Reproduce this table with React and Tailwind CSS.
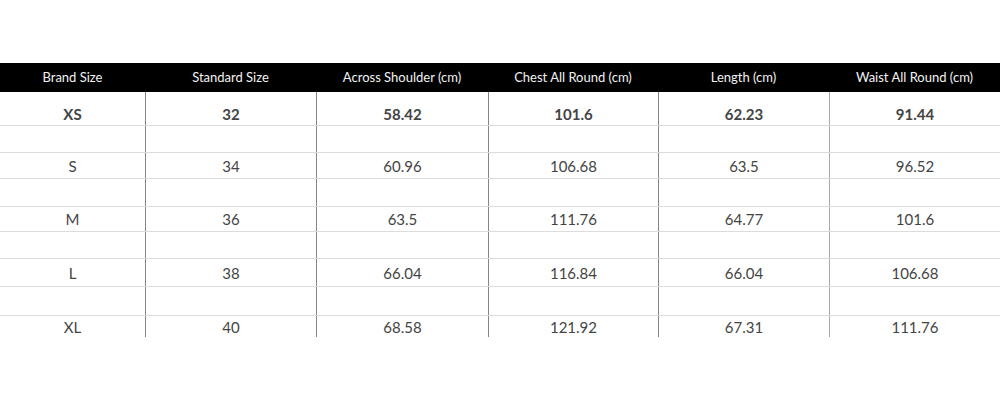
const columns = [
  { label: 'Brand Size', width: 'w-[145px]' },
  { label: 'Standard Size', width: 'w-[171px]' },
  { label: 'Across Shoulder (cm)', width: 'w-[172px]' },
  { label: 'Chest All Round (cm)', width: 'w-[170px]' },
  { label: 'Length (cm)', width: 'w-[171px]' },
  { label: 'Waist All Round (cm)', width: 'w-[171px]' },
];

const sizes = [
  ['XS', '32', '58.42', '101.6', '62.23', '91.44'],
  ['S', '34', '60.96', '106.68', '63.5', '96.52'],
  ['M', '36', '63.5', '111.76', '64.77', '101.6'],
  ['L', '38', '66.04', '116.84', '66.04', '106.68'],
  ['XL', '40', '68.58', '121.92', '67.31', '111.76'],
];

// row heights measured off the chart, spacer rows sit between the sizes
const rowHeights = ['h-[34px]', 'h-[26px]', 'h-[25px]', 'h-[28px]', 'h-[21px]'];
const spacerHeights = ['h-[27px]', 'h-[28px]', 'h-[27px]', 'h-[29px]'];

function cellBorder(i) {
  if (i === 0) return '';
  if (i === 5) return 'border-l border-[#a8a8a8]';
  return 'border-l border-[#858585]';
}

function Row({ cells, height, bold, last }) {
  return (
    <div className={`flex ${height} ${last ? 'overflow-hidden' : 'border-b border-[#dcdcdc]'}`}>
      {columns.map((col, i) => (
        <div
          key={col.label}
          className={`${col.width} ${cellBorder(i)} flex justify-center ${
            bold ? 'items-end pb-[2px] font-bold' : last ? 'items-start pt-[2px]' : 'items-center'
          } text-[15px] leading-[18px] text-[#444]`}
        >
          {cells ? cells[i] : ''}
        </div>
      ))}
    </div>
  );
}

export default function App() {
  return (
    <div className="w-[1000px] h-[400px] bg-white pt-[63px]" style={{ fontFamily: 'Lato, "Open Sans", sans-serif' }}>
      <div className="flex h-[29px] bg-black">
        {columns.map((col) => (
          <div key={col.label} className={`${col.width} flex items-center justify-center text-[13px] text-[#f2f2f2]`}>
            {col.label}
          </div>
        ))}
      </div>
      {sizes.map((cells, r) => (
        <div key={cells[0]}>
          <Row cells={cells} height={rowHeights[r]} bold={r === 0} last={r === sizes.length - 1} />
          {r < spacerHeights.length && <Row height={spacerHeights[r]} />}
        </div>
      ))}
    </div>
  );
}
